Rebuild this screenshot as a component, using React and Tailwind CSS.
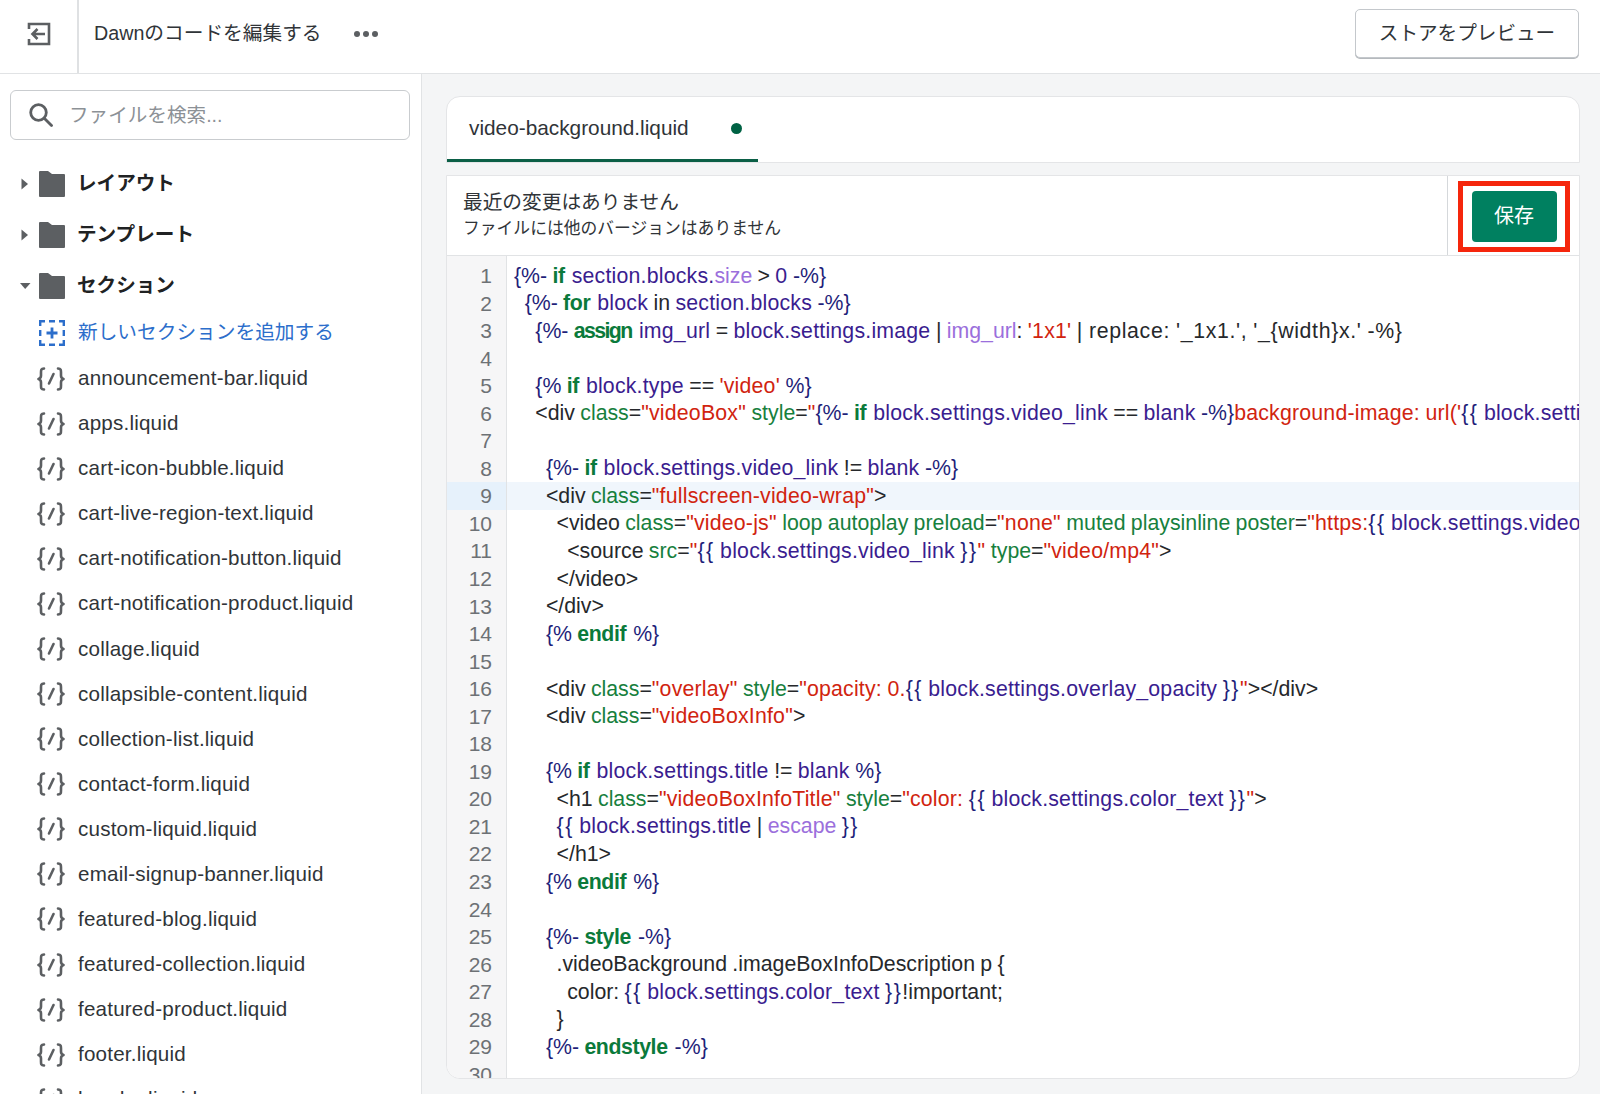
const font = 'font-["Liberation_Sans","Noto_Sans_CJK_JP",sans-serif]';

const files = [
  'announcement-bar.liquid',
  'apps.liquid',
  'cart-icon-bubble.liquid',
  'cart-live-region-text.liquid',
  'cart-notification-button.liquid',
  'cart-notification-product.liquid',
  'collage.liquid',
  'collapsible-content.liquid',
  'collection-list.liquid',
  'contact-form.liquid',
  'custom-liquid.liquid',
  'email-signup-banner.liquid',
  'featured-blog.liquid',
  'featured-collection.liquid',
  'featured-product.liquid',
  'footer.liquid',
  'header.liquid',
];

const tone = {
  n: 'text-[#1f1f7a]',
  m: 'text-[#1f1f7a] tracking-[1.5px] [word-spacing:-2px]',
  k: 'font-semibold text-[#0b7a3b] tracking-[-0.4px] [word-spacing:1.5px]',
  K: 'font-semibold text-[#0b7a3b] tracking-[-1.6px] [word-spacing:3px]',
  v: 'text-[#3a1d8f] tracking-[0.2px]',
  f: 'text-[#9b6fdc]',
  s: 'text-[#d1240f] tracking-[0.2px]',
  a: 'text-[#17803d]',
  p: 'text-[#26282b]',
  w: 'text-[#26282b] tracking-[0.65px]',
};

const code = [
  [['n', '{%- '], ['k', 'if '], ['v', 'section.blocks.'], ['f', 'size'], ['p', ' > '], ['v', '0 '], ['n', '-%}']],
  [['n', '  {%- '], ['k', 'for '], ['v', 'block '], ['p', 'in '], ['v', 'section.blocks '], ['n', '-%}']],
  [['n', '    {%- '], ['K', 'assign '], ['v', 'img_url '], ['p', '= '], ['v', 'block.settings.image '], ['p', '| '], ['f', 'img_url'], ['p', ': '], ['s', "'1x1' "], ['w', "| replace: '_1x1.', '_{width}x.' -%}"]],
  [],
  [['n', '    {% '], ['k', 'if '], ['v', 'block.type '], ['p', '== '], ['s', "'video' "], ['n', '%}']],
  [['p', '    <div '], ['a', 'class'], ['p', '='], ['s', '"videoBox" '], ['a', 'style'], ['p', '='], ['s', '"'], ['n', '{%- '], ['k', 'if '], ['v', 'block.settings.video_link '], ['p', '== '], ['v', 'blank '], ['n', '-%}'], ['s', "background-image: url('"], ['m', '{{ '], ['v', 'block.settings.video_poster'], ['m', ' }}']],
  [],
  [['n', '      {%- '], ['k', 'if '], ['v', 'block.settings.video_link '], ['p', '!= '], ['v', 'blank '], ['n', '-%}']],
  [['p', '      <div '], ['a', 'class'], ['p', '='], ['s', '"fullscreen-video-wrap"'], ['p', '>']],
  [['p', '        <video '], ['a', 'class'], ['p', '='], ['s', '"video-js" '], ['a', 'loop autoplay preload'], ['p', '='], ['s', '"none" '], ['a', 'muted playsinline poster'], ['p', '='], ['s', '"https:'], ['m', '{{ '], ['v', 'block.settings.video_poster'], ['m', ' }}']],
  [['p', '          <source '], ['a', 'src'], ['p', '='], ['s', '"'], ['m', '{{ '], ['v', 'block.settings.video_link '], ['m', '}}'], ['s', '" '], ['a', 'type'], ['p', '='], ['s', '"video/mp4"'], ['p', '>']],
  [['p', '        </video>']],
  [['p', '      </div>']],
  [['n', '      {% '], ['k', 'endif '], ['n', '%}']],
  [],
  [['p', '      <div '], ['a', 'class'], ['p', '='], ['s', '"overlay" '], ['a', 'style'], ['p', '='], ['s', '"opacity: 0.'], ['m', '{{ '], ['v', 'block.settings.overlay_opacity '], ['m', '}}'], ['s', '"'], ['p', '></div>']],
  [['p', '      <div '], ['a', 'class'], ['p', '='], ['s', '"videoBoxInfo"'], ['p', '>']],
  [],
  [['n', '      {% '], ['k', 'if '], ['v', 'block.settings.title '], ['p', '!= '], ['v', 'blank '], ['n', '%}']],
  [['p', '        <h1 '], ['a', 'class'], ['p', '='], ['s', '"videoBoxInfoTitle" '], ['a', 'style'], ['p', '='], ['s', '"color: '], ['m', '{{ '], ['v', 'block.settings.color_text '], ['m', '}}'], ['s', '"'], ['p', '>']],
  [['p', '        '], ['m', '{{ '], ['v', 'block.settings.title '], ['p', '| '], ['f', 'escape '], ['m', '}}']],
  [['p', '        </h1>']],
  [['n', '      {% '], ['k', 'endif '], ['n', '%}']],
  [],
  [['n', '      {%- '], ['k', 'style '], ['n', '-%}']],
  [['p', '        .videoBackground .imageBoxInfoDescription p {']],
  [['p', '          color: '], ['m', '{{ '], ['v', 'block.settings.color_text '], ['m', '}}'], ['p', '!important;']],
  [['p', '        }']],
  [['n', '      {%- '], ['k', 'endstyle '], ['n', '-%}']],
  [],
];

function BackIcon() {
  return (
    <svg width="24" height="24" viewBox="0 0 24 24" fill="none" stroke="#5c5f62" strokeWidth="2.6">
      <path d="M2 7V2h20v20H2v-5" />
      <path d="M18 12H5.500M10.500 7 5.500 12l5 5" />
    </svg>
  );
}

function SearchIcon() {
  return (
    <svg width="24" height="24" viewBox="0 0 24 24" fill="none" stroke="#5c5f62" strokeWidth="2.800" strokeLinecap="round">
      <circle cx="9.500" cy="9.500" r="7.800" />
      <path d="M15.500 15.500 22.500 22.500" />
    </svg>
  );
}

function FolderIcon() {
  return (
    <svg width="26" height="26" viewBox="0 0 26 26" fill="#5c5f62">
      <path d="M0 1a1 1 0 0 1 1-1h8l4 3h12a1 1 0 0 1 1 1v21a1 1 0 0 1-1 1H1a1 1 0 0 1-1-1z" />
    </svg>
  );
}

function Caret({ open }) {
  return (
    <svg width="12" height="12" viewBox="0 0 12 12" fill="#5c5f62">
      {open ? <path d="M1 3h10.500L6.200 9z" /> : <path d="M2.500 .5 9 6l-6.500 5.500z" />}
    </svg>
  );
}

function AddIcon() {
  return (
    <svg width="26" height="26" viewBox="0 0 26 26" fill="none" stroke="#2c6ecb" strokeWidth="2.400">
      <path d="M1.200 6V1.200H6M10 1.200h6M20 1.200h4.800V6M24.800 10v6M24.800 20v4.800H20M16 24.800h-6M6 24.800H1.200V20M1.200 16v-6" />
      <path d="M13 7.500v11M7.500 13h11" strokeWidth="2.800" />
    </svg>
  );
}

function LiquidIcon() {
  return (
    <svg width="28" height="24" viewBox="0 0 28 24" fill="none" stroke="#5c5f62" strokeWidth="2.600" strokeLinecap="round" strokeLinejoin="round">
      <path d="M7 1.500C4 1.500 4 3 4 5.500v3c0 2-1 3-2.500 3.500C3 12.500 4 13.500 4 15.500v3c0 2.500 0 4 3 4" />
      <path d="M21 1.500c3 0 3 1.500 3 4v3c0 2 1 3 2.500 3.500-1.500.5-2.500 1.500-2.500 3.500v3c0 2.500 0 4-3 4" />
      <path d="M16.500 7 12 16.500" />
    </svg>
  );
}

function Folder({ label, open }) {
  return (
    <div className="flex h-[51px] items-center pl-[19px]">
      <span className="flex w-[20px] shrink-0"><Caret open={open} /></span>
      <FolderIcon />
      <span className="ml-[12px] text-[19.6px] font-bold text-[#202223]">{label}</span>
    </div>
  );
}

function CodeLine({ num, tokens, active }) {
  return (
    <div className={`flex h-[27.55px] items-center ${active ? 'bg-[#f0f6fc]' : ''}`}>
      <span className={`w-[60px] shrink-0 border-r border-[#e1e3e5] pr-[14px] text-right text-[21px] leading-[27.55px] text-[#6d7175] ${active ? 'bg-[#e6f1fb]' : 'bg-[#f6f6f7]'}`}>{num}</span>
      <span className="whitespace-pre pl-[7px] pt-[1px] text-[21.3px] leading-[27.55px] [word-spacing:-0.6px]">
        {tokens.map(([t, text], i) => (
          <span key={i} className={tone[t]}>{text}</span>
        ))}
      </span>
    </div>
  );
}

export default function App() {
  return (
    <div className={`flex h-[1094px] w-[1600px] flex-col overflow-hidden bg-[#f4f5f6] ${font}`}>
      {/* top bar */}
      <header className="flex h-[74px] shrink-0 border-b border-[#e1e3e5] bg-white">
        <div className="flex h-full w-[79px] items-center justify-center border-r-2 border-[#dfe1e3] pb-[6px]">
          <BackIcon />
        </div>
        <div className="flex flex-1 items-center pb-[6px] pr-[21px]">
          <span className="ml-[15px] text-[19.7px] text-[#303438]">Dawnのコードを編集する</span>
          <span className="ml-[32px] flex gap-[3px]">
            <i className="size-[6px] rounded-full bg-[#5c5f62]" />
            <i className="size-[6px] rounded-full bg-[#5c5f62]" />
            <i className="size-[6px] rounded-full bg-[#5c5f62]" />
          </span>
          <button className="ml-auto flex h-[49px] w-[224px] items-center justify-center rounded-[5px] border border-[#c4c8cc] bg-white text-[19.6px] text-[#303438] shadow-[0_1px_0_#b5b9bd]">
            ストアをプレビュー
          </button>
        </div>
      </header>

      <div className="flex min-h-0 flex-1">
        {/* sidebar */}
        <aside className="w-[422px] shrink-0 overflow-hidden border-r border-[#e1e3e5] bg-white pt-[16px]">
          <div className="mx-[10px] flex h-[50px] w-[400px] items-center rounded-[6px] border border-[#c9cccf] px-[18px]">
            <SearchIcon />
            <span className="ml-[16px] pt-[1px] text-[19.6px] text-[#8c9196]">ファイルを検索...</span>
          </div>
          <div className="mt-[18px]">
            <Folder label="レイアウト" />
            <Folder label="テンプレート" />
            <Folder label="セクション" open />
          </div>
          <div className="flex h-[45px] items-center pb-[1px] pl-[39px]">
            <AddIcon />
            <span className="ml-[13px] text-[19.7px] text-[#2c6ecb]">新しいセクションを追加する</span>
          </div>
          <ul>
            {files.map((f) => (
              <li key={f} className="flex h-[45.08px] items-center pl-[37px]">
                <LiquidIcon />
                <span className="ml-[13px] text-[20.6px] tracking-[0.2px] text-[#303438]">{f}</span>
              </li>
            ))}
          </ul>
        </aside>

        {/* editor */}
        <main className="min-w-0 flex-1 pl-[24px] pr-[20px] pt-[22px]">
          <div className="flex h-[67px] rounded-t-[14px] border border-[#e4e5e7] bg-white">
            <div className="flex w-[311px] items-center border-b-[3px] border-[#0b5f46] pl-[22px]">
              <span className="text-[20.8px] text-[#303438]">video-background.liquid</span>
              <i className="ml-[42px] size-[11px] rounded-full bg-[#006244]" />
            </div>
          </div>
          <div className="mt-[12px] flex h-[904px] flex-col overflow-hidden rounded-b-[14px] border border-[#e4e5e7] bg-white">
            <div className="flex h-[80px] shrink-0 border-b border-[#e1e3e5]">
              <div className="flex-1 pl-[16px] pt-[12px]">
                <p className="text-[19.7px] leading-[28px] text-[#303438]">最近の変更はありません</p>
                <p className="text-[16.8px] leading-[25px] text-[#303438]">ファイルには他のバージョンはありません</p>
              </div>
              <div className="flex w-[132px] items-start border-l border-[#d5d8db] pl-[10px] pt-[5px]">
                <div className="flex h-[71px] w-[112px] items-center justify-center border-[5px] border-[#f5260c] bg-white pb-[1px]">
                  <button className="flex h-[51px] w-[85px] items-center justify-center rounded-[4px] bg-[#008060] text-[20px] text-white">保存</button>
                </div>
              </div>
            </div>
            <div className="flex min-h-0 flex-1 flex-col overflow-hidden">
              <div className="h-[6px] w-[60px] shrink-0 border-r border-[#e1e3e5] bg-[#f6f6f7]" />
              {code.map((tokens, i) => (
                <CodeLine key={i} num={i + 1} tokens={tokens} active={i === 8} />
              ))}
              <div className="w-[60px] flex-1 border-r border-[#e1e3e5] bg-[#f6f6f7]" />
            </div>
          </div>
        </main>
      </div>
    </div>
  );
}
